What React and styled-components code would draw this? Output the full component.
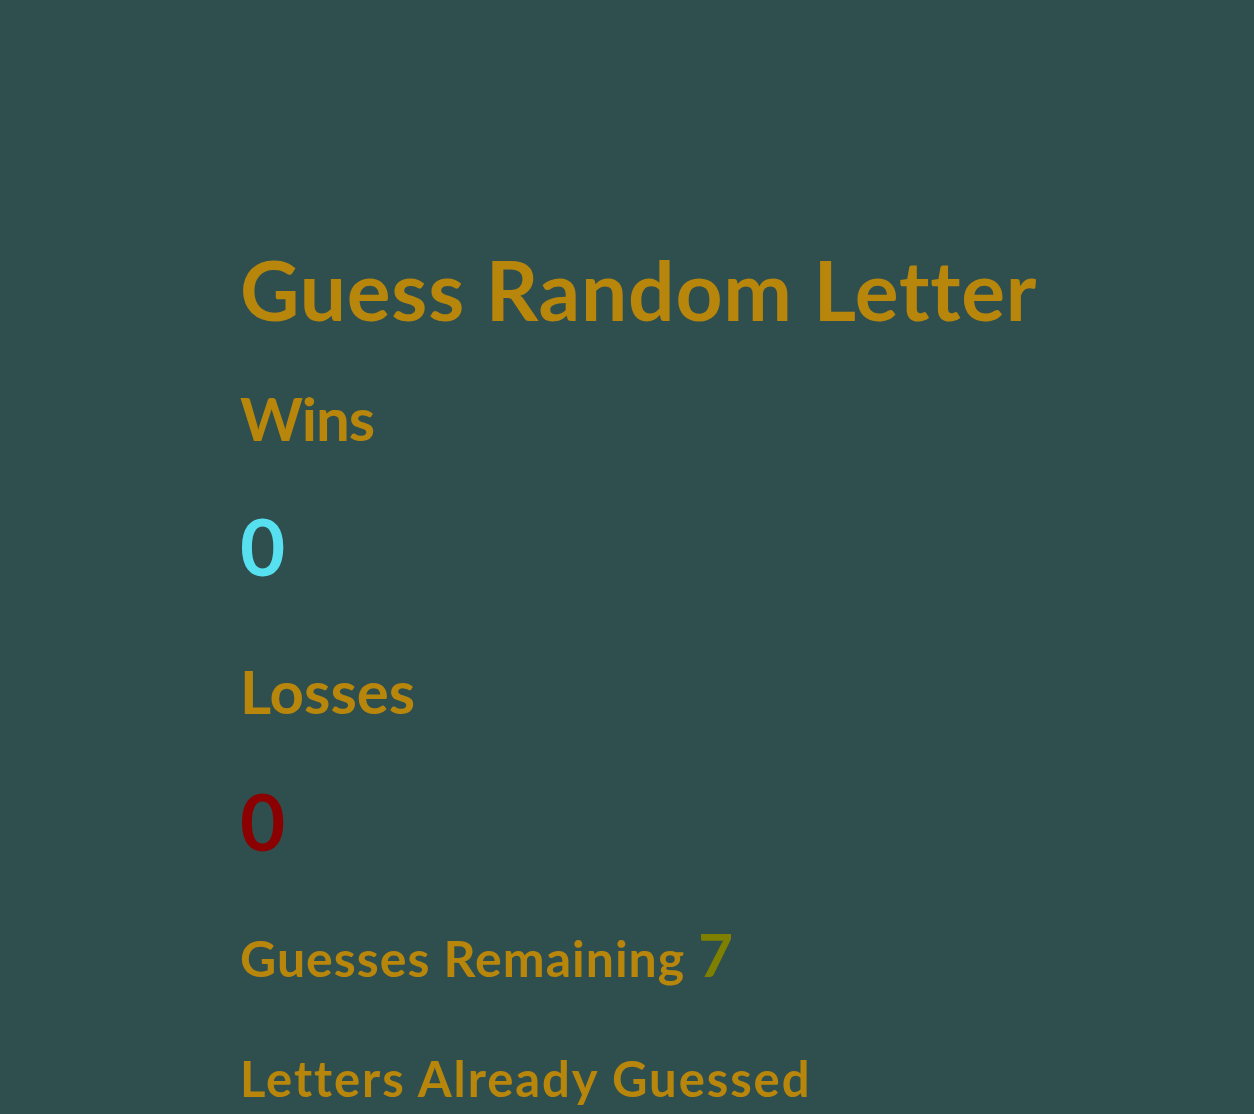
import React from "react";
import styled, { createGlobalStyle } from "styled-components";

const GlobalStyle = createGlobalStyle`
    html, body { margin: 0; padding: 0; background: #2f4f4f; }
    body { font-family: "Trebuchet MS", Lato, "Open Sans", sans-serif; }
`;

const Page = styled.main`
    min-height: 100vh;
    box-sizing: border-box;
    padding: 240px 0 0 240px;
    background: #2f4f4f;
    color: #b8860b;
    font-weight: 700;
    line-height: 1.2;
    font-variant-ligatures: none;
`;

const Title = styled.h1`
    margin: 0 0 44px;
    font-size: 82px;
    font-weight: 700;
    line-height: 1.2;
    letter-spacing: 0.8px;
`;

const Label = styled.h2`
    margin: 0 0 ${(p) => p.$gap}px;
    font-size: ${(p) => p.$size}px;
    font-weight: 700;
    line-height: 1.2;
    letter-spacing: ${(p) => p.$spacing || 0}px;
`;

const Count = styled.div`
    margin: 0 0 ${(p) => p.$gap}px;
    font-size: 78px;
    color: ${(p) => p.$color};
`;

const Row = styled.div`
    display: flex;
    align-items: baseline;
    gap: 13px;
    margin: 0 0 59px;
`;

const RowLabel = styled.span`
    font-size: 50px;
    letter-spacing: 1px;
`;

const Remaining = styled.span`
    font-size: 60px;
    color: #808000;
`;

const App = () => {
    const wins = 0;
    const losses = 0;
    const guessesLeft = 7;

    return (
        <>
            <GlobalStyle />
            <Page>
                <Title>Guess Random Letter</Title>
                <Label $size={60} $gap={46} $spacing={-1}>Wins</Label>
                <Count $color="#56e0f0" $gap={61}>{wins}</Count>
                <Label $size={60} $gap={48}>Losses</Label>
                <Count $color="#8b0000" $gap={49}>{losses}</Count>
                <Row>
                    <RowLabel>Guesses Remaining</RowLabel>
                    <Remaining>{guessesLeft}</Remaining>
                </Row>
                <Label $size={49} $gap={0} $spacing={1.9}>Letters Already Guessed</Label>
            </Page>
        </>
    );
};

export default App;
